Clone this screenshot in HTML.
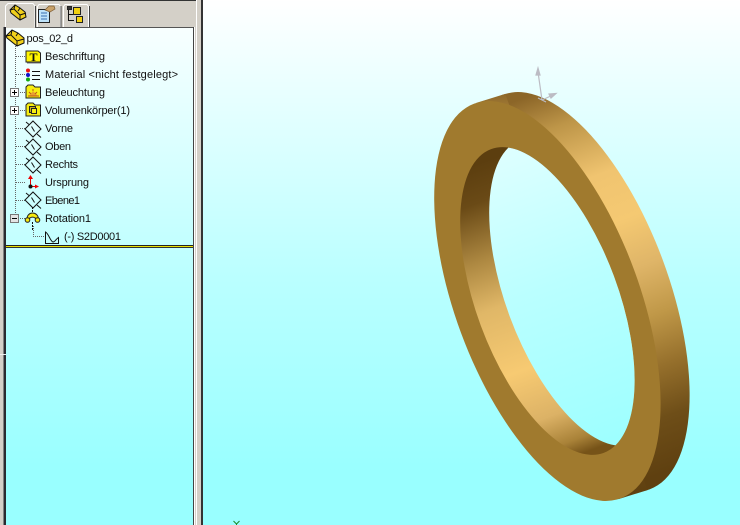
<!DOCTYPE html>
<html><head><meta charset="utf-8"><style>
html,body{margin:0;padding:0;width:740px;height:525px;overflow:hidden;background:#fff}
svg{display:block}
text{font-family:"Liberation Sans",sans-serif;font-size:11px;fill:#111}
</style></head><body>
<svg width="740" height="525" viewBox="0 0 740 525" xmlns="http://www.w3.org/2000/svg">
<defs>
<linearGradient id="sky" gradientUnits="userSpaceOnUse" x1="0" y1="0" x2="0" y2="525"><stop offset="0" stop-color="#fff"/><stop offset=".53" stop-color="#baffff"/><stop offset=".9" stop-color="#99ffff"/><stop offset="1" stop-color="#99ffff"/></linearGradient>
<linearGradient id="band" gradientUnits="userSpaceOnUse" x1="0" y1="92" x2="0" y2="492">
<stop offset="0" stop-color="#8c6628"/><stop offset=".095" stop-color="#bd9548"/><stop offset=".245" stop-color="#f0c470"/><stop offset=".37" stop-color="#f5c972"/><stop offset=".495" stop-color="#dfb568"/><stop offset=".62" stop-color="#c09848"/><stop offset=".745" stop-color="#96702c"/><stop offset=".87" stop-color="#6e4e18"/><stop offset="1" stop-color="#5f4010"/></linearGradient>
<linearGradient id="wall" gradientUnits="userSpaceOnUse" x1="0" y1="148" x2="0" y2="456">
<stop offset="0" stop-color="#5c3e0f"/><stop offset=".12" stop-color="#6a4a16"/><stop offset=".3" stop-color="#ad8841"/><stop offset=".46" stop-color="#e0b767"/><stop offset=".68" stop-color="#f7ca72"/><stop offset=".85" stop-color="#dcb266"/><stop offset=".95" stop-color="#a98238"/><stop offset="1" stop-color="#765318"/></linearGradient>
<clipPath id="innerClip"><ellipse cx="547.4" cy="301" rx="71" ry="162" transform="rotate(-20.35 547.4 301)"/></clipPath>
<g id="plane" fill="none" stroke="#111" stroke-width="1"><path d="M33 -8 L41 0 L33 8 L25 0Z"/><path d="M31.500 -2.500 L34.500 2.500"/><path d="M37 5 L41 8.500 M26 -7 L29 -4.500"/></g>
</defs>

<rect width="740" height="525" fill="url(#sky)"/>

<!-- left panel chrome -->
<rect x="0" y="0" width="203" height="525" fill="#d4d0c8"/>
<rect x="0" y="0" width="197" height="1" fill="#333"/>
<rect x="3" y="27" width="1" height="498" fill="#808080"/>
<rect x="4" y="27" width="2" height="498" fill="#2a2a30"/>
<rect x="6" y="28" width="187" height="497" fill="url(#sky)"/>
<rect x="35" y="27" width="158" height="1" fill="#555"/>
<rect x="193" y="27" width="1" height="498" fill="#444"/>
<rect x="194" y="27" width="1" height="498" fill="#fff"/>
<rect x="196" y="0" width="1" height="525" fill="#fff"/>
<rect x="201" y="0" width="2" height="525" fill="#333"/>
<rect x="0" y="354" width="6" height="1" fill="#eee"/>

<!-- tabs -->
<path d="M5.500 27 V6 L8 3.500 H33 L35 6 V27" fill="#d4d0c8" stroke="#fff"/>
<path d="M35.500 6 V27" stroke="#444" fill="none"/>
<path d="M37.500 27 V6.500 L39 4.500 H59 L60.500 6.500 V27" fill="#d4d0c8" stroke="#fff"/>
<path d="M61 6 V27" stroke="#444" fill="none"/>
<path d="M63.500 27 V6.500 L65 4.500 H87 L88.500 6.500 V27" fill="#d4d0c8" stroke="#fff"/>
<path d="M89.500 6 V27" stroke="#444" fill="none"/>
<!-- tab icon 1 -->
<path d="M10 10 L15 5 L20 8 L25 12 L26 17 L20 20 L11 13Z" fill="#f0cf1c" stroke="#111"/>
<path d="M15 5 L14 9 L20 15 L26 13 M14 9 L10 10 M20 15 L20 20 M20 8 L18 11" fill="none" stroke="#111"/>
<!-- tab icon 2 -->
<rect x="38.500" y="9.500" width="11" height="13" fill="#bfe3fa" stroke="#222"/>
<path d="M41 13H47M41 16H47M41 19H47" stroke="#3a6fb0"/>
<path d="M45 10 L49 6 L54 6 L55 9 L50 12Z" fill="#c9a26a" stroke="#7a5a30" stroke-width=".7"/>
<!-- tab icon 3 -->
<path d="M68.500 9V20.500H74M68.500 14.500H73" fill="none" stroke="#111"/>
<rect x="67.500" y="6.500" width="4" height="3" fill="#333" stroke="#222"/>
<rect x="73.500" y="7.500" width="7" height="7" fill="#f2d010" stroke="#222"/>
<rect x="76.500" y="16.500" width="6" height="6" fill="#f2d010" stroke="#222"/>

<!-- tree connectors -->
<path d="M15.500 40 V214 M33.500 226 V236.500 H44 M16 56.500 H26 M16 74.500 H26 M20 92.500 H26 M20 110.500 H26 M16 128.500 H25 M16 146.500 H25 M16 164.500 H25 M16 182.500 H26 M16 200.500 H25 M20 218.500 H25" fill="none" stroke="#666" stroke-width="1" stroke-dasharray="1 1"/>

<!-- root icon -->
<path d="M6 36 L12 30 L18 33 L24 38 L24 43 L17 46 L7 38Z" fill="#f4d21a" stroke="#111"/>
<path d="M12 30 L11 35 L17 41 L24 39 M11 35 L6 36 M17 41 L17 46 M18 33 L16 36" fill="none" stroke="#111"/>
<text x="26.500" y="42" textLength="46.500">pos_02_d</text>

<!-- Beschriftung icon -->
<path d="M26 51 H38 L40.500 53 V62 H26Z" fill="#fff400" stroke="#222"/>
<path d="M27 63 H41" stroke="#777"/>
<text x="29.500" y="61" style="font-family:'Liberation Serif',serif;font-weight:bold;font-size:12px">T</text>
<text x="45" y="60" textLength="60">Beschriftung</text>

<!-- Material icon -->
<path d="M32 71.500 H40 M32 75.500 H40 M32 79.500 H40" stroke="#111"/>
<circle cx="28" cy="70.500" r="2" fill="#e11"/><circle cx="28" cy="75" r="2" fill="#11c"/><circle cx="28" cy="79.500" r="2" fill="#1a1"/>
<text x="45" y="78" textLength="133">Material &lt;nicht festgelegt&gt;</text>

<!-- Beleuchtung -->
<rect x="10.500" y="88.500" width="8" height="8" fill="#fff" stroke="#777"/>
<path d="M12 92.500H17M14.500 90V95" stroke="#000"/>
<path d="M26 87 L28 85 H33 L35 87 H40.500 V98 H26Z" fill="#f7ee10" stroke="#222"/>
<path d="M29 96 L33 91 L38 96Z" fill="#e8a030"/><path d="M29 92 L31 94M37 92 L35 94M33 89 V91M28 96H39" stroke="#c0501a"/>
<text x="45" y="96" textLength="60">Beleuchtung</text>

<!-- Volumenkörper -->
<rect x="10.500" y="106.500" width="8" height="8" fill="#fff" stroke="#777"/>
<path d="M12 110.500H17M14.500 108V113" stroke="#000"/>
<path d="M26 105 L28 103 H33 L35 105 H40.500 V116 H26Z" fill="#f7ee10" stroke="#222"/>
<rect x="29.500" y="106.500" width="6" height="6" fill="#c8b020" stroke="#222"/><rect x="31.500" y="108.500" width="5" height="5" fill="#f7ee10" stroke="#222"/>
<text x="45" y="114" textLength="85">Volumenkörper(1)</text>

<!-- planes -->
<use href="#plane" y="129"/>
<use href="#plane" y="147"/>
<use href="#plane" y="165"/>
<use href="#plane" y="200"/>
<text x="45" y="132" textLength="28">Vorne</text>
<text x="45" y="150" textLength="26">Oben</text>
<text x="45" y="168" textLength="33">Rechts</text>

<!-- Ursprung -->
<path d="M30.500 186 V177 M30.500 186.500 H37" stroke="#e00" stroke-width="1" fill="none"/>
<path d="M30.500 175 L28 179 H33Z M39 186.500 L35 184.500 V188.500Z" fill="#e00"/>
<circle cx="30.500" cy="186.500" r="2" fill="#111"/>
<text x="45" y="186" textLength="44">Ursprung</text>
<text x="45" y="204" textLength="35">Ebene1</text>

<!-- Rotation1 -->
<rect x="10.500" y="214.500" width="8" height="8" fill="#e4e4e4" stroke="#777"/>
<path d="M12 218.500H17" stroke="#000"/>
<path d="M32.500 207 V212 M32.500 222 V230" stroke="#111" stroke-dasharray="2 1"/>
<path d="M27 219 C27 211 38 211 38.500 219 L35 218 C33.500 217 31.500 217 30 218Z" fill="#f5ea10" stroke="#222"/>
<circle cx="27.500" cy="220" r="2.300" fill="#f5ea10" stroke="#222"/><circle cx="37.500" cy="220" r="2.300" fill="#f5ea10" stroke="#222"/>
<text x="45" y="222" textLength="46">Rotation1</text>

<!-- sketch -->
<path d="M45.500 232 V243.500 H58.500 V237.500 C56 239 55 242 53 242 C50 241 49 234 45.500 232Z" fill="none" stroke="#111"/>
<text x="64" y="240" textLength="57">(-) S2D0001</text>

<!-- yellow rule -->
<rect x="6" y="245" width="187" height="1" fill="#222"/>
<rect x="6" y="246" width="187" height="1" fill="#e8e000"/>
<rect x="6" y="247" width="187" height="1" fill="#333"/>

<!-- RING -->
<ellipse cx="576.400" cy="292" rx="92.100" ry="210.500" transform="rotate(-20.35 576.400 292)" fill="url(#band)"/>
<path d="M476.300 102.900 L505.300 93.900 L647.500 490.100 L618.500 499.100Z" fill="url(#band)"/>
<ellipse cx="547.400" cy="301" rx="92.100" ry="210.500" transform="rotate(-20.35 547.400 301)" fill="#a07a2e"/>
<ellipse cx="547.400" cy="301" rx="71" ry="162" transform="rotate(-20.35 547.400 301)" fill="url(#wall)"/>
<g clip-path="url(#innerClip)"><ellipse cx="576.400" cy="292" rx="71" ry="162" transform="rotate(-20.35 576.400 292)" fill="url(#sky)"/></g>

<!-- axes -->
<g stroke="#bcbcc4" stroke-width="1.200" fill="#bcbcc4">
<path d="M542 100 L538 72 M542 100 L553 95 M542 100 L538 98 M542 100 L546 102" fill="none"/>
<path d="M538 68 L536 75 L540 75Z M556 93.500 L549 94 L551 98Z"/>
</g>
<!-- green triad fragment -->
<path d="M233.500 521 L236.500 524 L239.500 521 M236.500 524 V525" stroke="#1a8a2a" fill="none"/>
</svg>
</body></html>
